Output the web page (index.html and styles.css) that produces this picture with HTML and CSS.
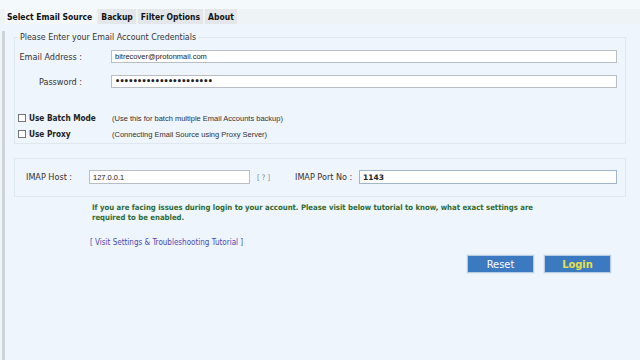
FILE: index.html
```html
<!DOCTYPE html>
<html lang="en">
<head>
    <meta charset="UTF-8">
    <title>Select Email Source</title>
    <link rel="stylesheet" href="styles.css">
</head>
<body>
    <div class="top-strip"></div>

    <!-- Tabs -->
    <div class="tabs">
        <span class="tab active">Select Email Source</span>
        <span class="tab">Backup</span>
        <span class="tab">Filter Options</span>
        <span class="tab">About</span>
    </div>

    <div class="main">
        <!-- Credentials -->
        <fieldset class="group creds">
            <legend>Please Enter your Email Account Credentials</legend>
            <div class="row first">
                <label class="label">Email Address :</label>
                <div class="input">bitrecover@protonmail.com</div>
            </div>
            <div class="row">
                <label class="label">Password :</label>
                <div class="input dots">••••••••••••••••••••••</div>
            </div>
            <div class="check-row batch">
                <span class="box"></span>
                <span class="check-label">Use Batch Mode</span>
                <span class="check-desc">(Use this for batch multiple Email Accounts backup)</span>
            </div>
            <div class="check-row">
                <span class="box"></span>
                <span class="check-label">Use Proxy</span>
                <span class="check-desc">(Connecting Email Source using Proxy Server)</span>
            </div>
        </fieldset>

        <!-- IMAP -->
        <fieldset class="group imap">
            <div class="imap-row">
                <span class="imap-label">IMAP Host :</span>
                <div class="input host">127.0.0.1</div>
                <span class="help">[ ? ]</span>
                <span class="port-label">IMAP Port No :</span>
                <div class="input port">1143</div>
            </div>
        </fieldset>

        <p class="notice">If you are facing issues during login to your account. Please visit below tutorial to know, what exact settings are required to be enabled.</p>
        <a class="tutorial" href="#">[ Visit Settings &amp; Troubleshooting Tutorial ]</a>

        <div class="actions">
            <button class="btn">Reset</button>
            <button class="btn login">Login</button>
        </div>
    </div>
</body>
</html>
```

FILE: styles.css
```css
* {
    margin: 0;
    padding: 0;
    box-sizing: border-box;
}

body {
    background: #eef5fd;
    font-family: "DejaVu Sans Condensed", "DejaVu Sans", sans-serif;
    font-size: 8px;
    color: #333;
    height: 360px;
    overflow: hidden;
    padding-left: 2px;
}

.top-strip {
    height: 9px;
    background: #f4fafb;
    margin-left: -2px;
}

/* Tabs */
.tabs {
    display: flex;
    height: 15px;
    background: #eef4f6;
    margin-left: -2px;
    padding-left: 5px;
    gap: 2px;
    align-items: stretch;
}

.tab {
    display: flex;
    align-items: center;
    padding: 0 3px;
    background: #e3e7ea;
    font-weight: bold;
    font-size: 8.5px;
    color: #111;
}

.tab.active {
    background: #f5f8fb;
    padding: 0 4px 0 2px;
}

/* Main panel */
.main {
    height: 336px;
    border-left: 3px solid #cfd4d7;
    padding: 0 14px 0 9px;
}

.group {
    border: 1px solid #dfe7ef;
}

.creds {
    margin-top: 7px;
    padding-bottom: 4px;
}

.creds legend {
    margin-left: 3px;
    padding: 0 2px;
    line-height: 12px;
    font-size: 8.8px;
    color: #333;
}

.row {
    display: flex;
    align-items: center;
    height: 13px;
    margin-top: 12px;
}

.row.first {
    margin-top: 7px;
}

.label {
    width: 67px;
    text-align: right;
    margin-right: 29px;
    font-size: 9px;
}

.input {
    background: #fff;
    border: 1px solid #b9bec4;
    height: 100%;
    display: flex;
    align-items: center;
    padding-left: 3px;
    font-family: "Liberation Sans", sans-serif;
    font-size: 7.5px;
    color: #222;
}

.row .input {
    flex: 1;
    margin-right: 8px;
}

.input.dots {
    font-family: "DejaVu Sans", sans-serif;
    font-size: 8px;
    letter-spacing: -0.7px;
    font-weight: bold;
}

.check-row {
    display: flex;
    align-items: center;
    height: 10px;
    margin-top: 6px;
    padding-left: 3px;
}

.check-row.batch {
    margin-top: 25px;
}

.box {
    width: 8px;
    height: 8px;
    border: 1px solid #777;
    background: #fff;
    margin-right: 3px;
}

.check-label {
    width: 83px;
    font-weight: bold;
    font-size: 8.2px;
    color: #222;
}

.check-desc {
    font-family: "Liberation Sans", sans-serif;
    font-size: 7.5px;
    color: #333;
}

/* IMAP */
.imap {
    margin-top: 14px;
    padding: 11px 0 12px 11px;
}

.imap-row {
    display: flex;
    align-items: center;
    height: 14px;
}

.imap-label {
    width: 63px;
    font-size: 9px;
}

.input.host {
    width: 161px;
}

.help {
    width: 16px;
    margin: 0 22px 0 7px;
    color: #7d8aa0;
    font-size: 7.5px;
}

.port-label {
    width: 64px;
    font-size: 9px;
}

.input.port {
    flex: 1;
    margin-right: 8px;
    border-color: #9fb6cc;
    font-weight: bold;
    font-family: "DejaVu Sans", sans-serif;
    font-size: 7.5px;
}

.notice {
    margin: 6px 0 0 78px;
    width: 448px;
    font-weight: bold;
    font-size: 7.7px;
    line-height: 10px;
    color: #2f6b33;
}

.tutorial {
    display: block;
    margin: 15px 0 0 76px;
    line-height: 10px;
    font-size: 8px;
    color: #4a4ab0;
    text-decoration: none;
}

.actions {
    display: flex;
    justify-content: flex-end;
    gap: 10px;
    margin-top: 7px;
    padding-right: 15px;
}

.btn {
    width: 67px;
    height: 18px;
    background: #3b7ac0;
    border: 1px solid #b8cde2;
    outline: 1px solid #e3ecf5;
    color: #fff;
    font-family: "DejaVu Sans Condensed", "DejaVu Sans", sans-serif;
    font-size: 11px;
}

.btn.login {
    color: #e6e04a;
    font-weight: bold;
}
```
